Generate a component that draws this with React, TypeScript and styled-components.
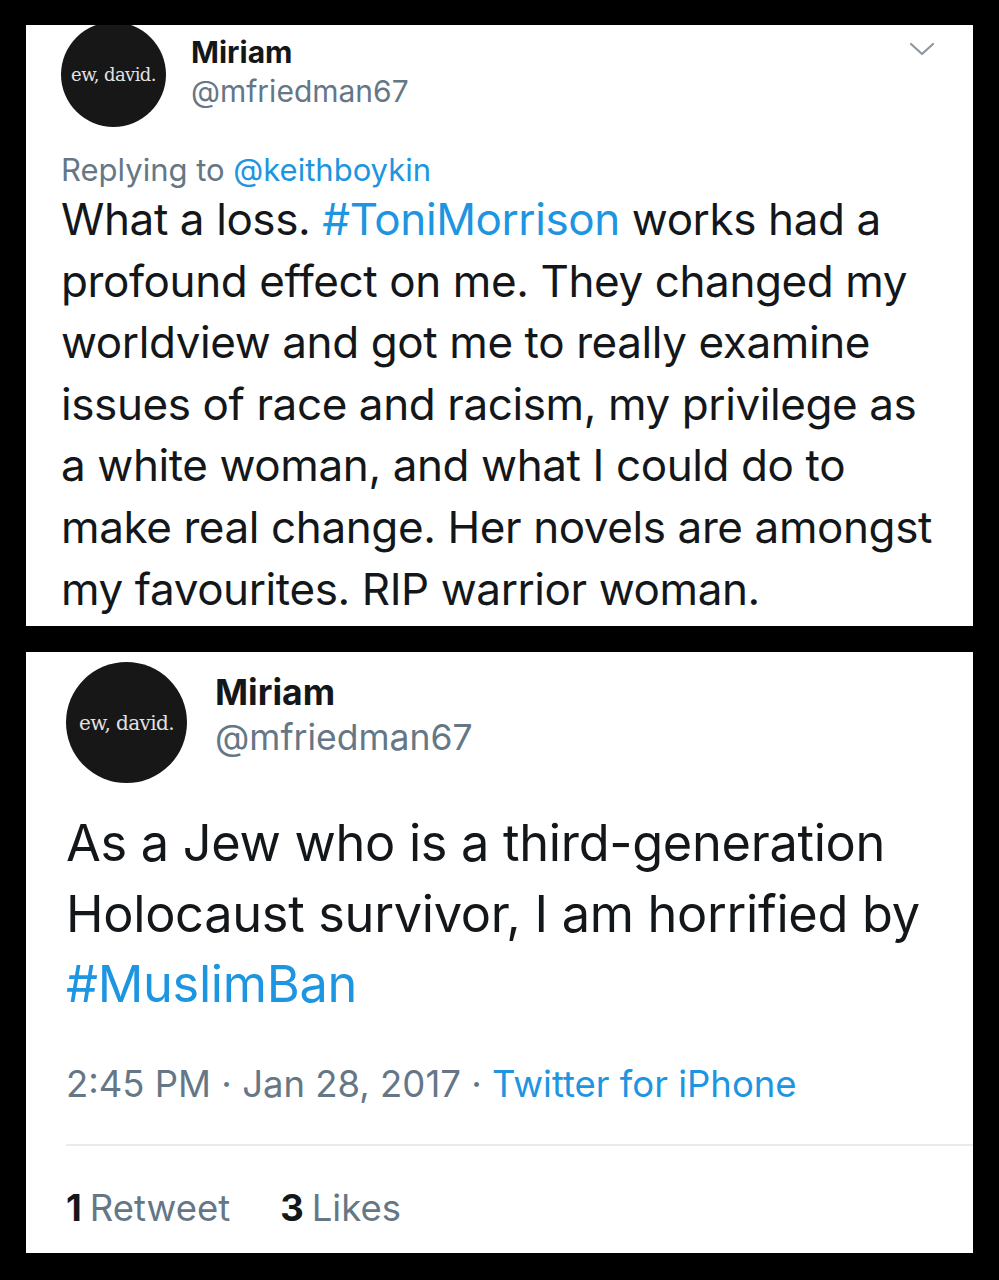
import styled, { createGlobalStyle } from 'styled-components';

const GlobalStyle = createGlobalStyle`
    html, body {
        margin: 0;
        padding: 0;
        background: #000;
    }

    body {
        font-family: Inter, 'Noto Sans', sans-serif;
        color: #14171a;
    }
`;

const Page = styled.div`
    width: 999px;
    height: 1280px;
    box-sizing: border-box;
    padding: 25px 26px 27px 26px;
    display: flex;
    flex-direction: column;
    gap: 26px;
    background: #000;
`;

const Card = styled.div<{ $height: number; $padLeft: number }>`
    height: ${(p) => p.$height}px;
    box-sizing: border-box;
    padding: 0 0 0 ${(p) => p.$padLeft}px;
    background: #fff;
    overflow: hidden;
    display: flex;
    flex-direction: column;
`;

const Header = styled.div`
    display: flex;
    flex-direction: row;
    align-items: flex-start;
    padding-right: 40px;
`;

const Avatar = styled.div<{ $size: number; $font: number; $offset: number }>`
    width: ${(p) => p.$size}px;
    height: ${(p) => p.$size}px;
    margin-top: ${(p) => p.$offset}px;
    flex-shrink: 0;
    border-radius: 50%;
    background: #171717;
    color: #e2e2e2;
    display: flex;
    align-items: center;
    justify-content: center;
    font-family: 'DejaVu Serif', 'Liberation Serif', serif;
    font-size: ${(p) => p.$font}px;
    letter-spacing: -0.6px;
    white-space: nowrap;
`;

const Names = styled.div<{ $gap: number; $top: number }>`
    display: flex;
    flex-direction: column;
    margin-left: ${(p) => p.$gap}px;
    padding-top: ${(p) => p.$top}px;
    flex: 1;
`;

const DisplayName = styled.div<{ $size: number; $line: number }>`
    font-size: ${(p) => p.$size}px;
    line-height: ${(p) => p.$line}px;
    font-weight: 700;
    color: #14171a;
`;

const Handle = styled.div<{ $size: number; $line: number }>`
    font-size: ${(p) => p.$size}px;
    line-height: ${(p) => p.$line}px;
    color: #657786;
`;

const Caret = styled.svg`
    width: 26px;
    height: 16px;
    margin-top: 16px;
    margin-right: -2px;
    color: #8a98a5;
`;

const ReplyLine = styled.div`
    margin-top: 24px;
    font-size: 31px;
    line-height: 38px;
    color: #657786;
`;

const Link = styled.span`
    color: #1d95e0;
`;

const Body = styled.div<{ $size: number; $line: number; $top: number; $track: number; $right: number }>`
    margin-top: ${(p) => p.$top}px;
    padding-right: ${(p) => p.$right}px;
    font-size: ${(p) => p.$size}px;
    line-height: ${(p) => p.$line}px;
    letter-spacing: ${(p) => p.$track}px;
    color: #14171a;
`;

const Meta = styled.div`
    margin-top: 42px;
    font-size: 36.5px;
    line-height: 44px;
    color: #657786;
`;

const Divider = styled.div`
    margin-top: 38px;
    height: 2px;
    background: #e6ecf0;
`;

const Stats = styled.div`
    margin-top: 40px;
    display: flex;
    flex-direction: row;
    gap: 50px;
    font-size: 36.5px;
    line-height: 44px;
    color: #657786;
`;

const Stat = styled.span`
    b {
        color: #14171a;
        font-weight: 700;
        margin-right: 8px;
    }
`;

const App = () => {
    return (
        <>
            <GlobalStyle />
            <Page>
                <Card $height={601} $padLeft={35}>
                    <Header>
                        <Avatar $size={105} $font={18} $offset={-3}>ew, david.</Avatar>
                        <Names $gap={25} $top={8}>
                            <DisplayName $size={30} $line={39}>Miriam</DisplayName>
                            <Handle $size={30} $line={39}>@mfriedman67</Handle>
                        </Names>
                        <Caret viewBox="0 0 26 16" fill="none">
                            <path d="M2 3 L13 13 L24 3" stroke="currentColor" strokeWidth="2.2" strokeLinecap="round" strokeLinejoin="round" />
                        </Caret>
                    </Header>
                    <ReplyLine>
                        Replying to <Link>@keithboykin</Link>
                    </ReplyLine>
                    <Body $size={44} $line={61.6} $top={0} $track={-0.4} $right={32}>
                        What a loss. <Link>#ToniMorrison</Link> works had a profound effect on me. They changed my
                        worldview and got me to really examine issues of race and racism, my privilege as a white
                        woman, and what I could do to make real change. Her novels are amongst my favourites. RIP
                        warrior woman.
                    </Body>
                </Card>
                <Card $height={601} $padLeft={40}>
                    <Header>
                        <Avatar $size={121} $font={20} $offset={10}>ew, david.</Avatar>
                        <Names $gap={28} $top={18}>
                            <DisplayName $size={35.5} $line={45}>Miriam</DisplayName>
                            <Handle $size={35.5} $line={45}>@mfriedman67</Handle>
                        </Names>
                    </Header>
                    <Body $size={50.5} $line={70.5} $top={25} $track={-0.3} $right={16}>
                        As a Jew who is a third-generation Holocaust survivor, I am horrified by <Link>#MuslimBan</Link>
                    </Body>
                    <Meta>
                        2:45 PM · Jan 28, 2017 · <Link>Twitter for iPhone</Link>
                    </Meta>
                    <Divider />
                    <Stats>
                        <Stat><b>1</b>Retweet</Stat>
                        <Stat><b>3</b>Likes</Stat>
                    </Stats>
                </Card>
            </Page>
        </>
    );
};

export default App;
